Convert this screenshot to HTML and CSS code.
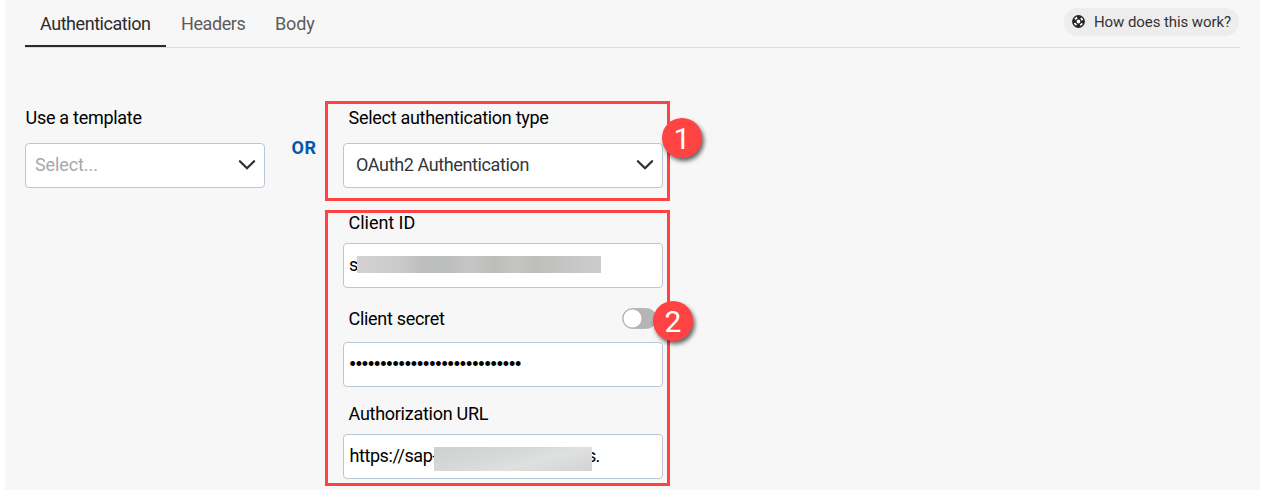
FILE: index.html
```html
<!DOCTYPE html>
<html lang="en">
<head>
<meta charset="utf-8">
<title>Authentication</title>
<link rel="stylesheet" href="styles.css">
</head>
<body>
<main class="panel">
  <header class="topbar">
    <nav class="tabs">
      <a class="tab tab-active"><span>Authentication</span></a>
      <a class="tab tab-headers"><span>Headers</span></a>
      <a class="tab tab-body"><span>Body</span></a>
    </nav>
    <a class="help">
      <svg class="help-icon" width="13" height="13" viewBox="0 0 13 13">
        <circle cx="6.5" cy="6.5" r="4.1" fill="none" stroke="#fff" stroke-width="3"/>
        <circle cx="6.5" cy="6.5" r="5.7" fill="none" stroke="#222" stroke-width="1.4"/>
        <circle cx="6.5" cy="6.5" r="4.1" fill="none" stroke="#222" stroke-width="3" stroke-dasharray="3.8 2.64" stroke-dashoffset="1.9"/>
        <circle cx="6.5" cy="6.5" r="2.5" fill="#fff" stroke="#222" stroke-width="1.2"/>
      </svg>
      <span>How does this work?</span>
    </a>
  </header>
  <div class="content">
    <section class="template">
      <label class="label label-template"><span>Use a template</span></label>
      <div class="field select"><span class="placeholder">Select...</span>
        <svg class="chevron" width="18" height="12" viewBox="0 0 18 12"><path d="M1.9 2.2 9 9.2l7.1-7" fill="none" stroke="#2c3136" stroke-width="2.3" stroke-linecap="round"/></svg>
      </div>
    </section>
    <div class="or"><span>OR</span></div>
    <div class="forms">
      <section class="group group-type">
        <label class="label label-type"><span>Select authentication type</span></label>
        <div class="field select"><span class="value">OAuth2 Authentication</span>
          <svg class="chevron" width="18" height="12" viewBox="0 0 18 12"><path d="M1.9 2.2 9 9.2l7.1-7" fill="none" stroke="#2c3136" stroke-width="2.3" stroke-linecap="round"/></svg>
        </div>
        <div class="badge badge-one">1</div>
      </section>
      <section class="group group-credentials">
        <label class="label label-id"><span>Client ID</span></label>
        <div class="field id-field"><span class="id-start">s</span><i class="mask mask-id"></i></div>
        <div class="secret-row"><label class="label label-secret"><span>Client secret</span></label><i class="toggle"></i></div>
        <div class="field secret-field"><span class="dots">••••••••••••••••••••••••••••</span></div>
        <label class="label label-url"><span>Authorization URL</span></label>
        <div class="field url-field"><span class="url">https://sap-</span><i class="mask mask-url"></i><span class="url-end">s.</span></div>
        <div class="badge badge-two">2</div>
      </section>
    </div>
  </div>
</main>
</body>
</html>
```
FILE: styles.css
```css
* { box-sizing: border-box; }
body { margin: 0; background: #fff; font-family: Roboto, "Liberation Sans", sans-serif; font-size: 18px; color: #000; }
.panel { width: 1255px; height: 490px; margin: 0 5px; padding: 0 20px; background: #f7f7f7; overflow: hidden; }
.topbar { display: flex; justify-content: space-between; width: 1215px; height: 48px; border-bottom: 1px solid #dcdcdc; }
.tabs { display: flex; }
.tab { height: 47px; line-height: 48px; padding: 0 15px; color: #5c5c5c; white-space: nowrap; }
.tab-active { width: 141px; height: 47px; color: #2b2b2b; border-bottom: 2px solid #2b2b2b; letter-spacing: -0.45px; }
.tab-headers { width: 94px; letter-spacing: -0.42px; }
.tab-body { letter-spacing: -0.1px; }
.help { display: flex; align-items: center; width: 175px; height: 28px; margin: 8px 1px 0 0; padding-left: 8px; gap: 9px; border-radius: 14px; background: #ededed; color: #333; font-size: 15px; letter-spacing: -0.08px; white-space: nowrap; }
.help-icon { flex: none; margin-top: -2px; }
.content { display: flex; padding-top: 53px; }
.template { width: 240px; padding-top: 3px; }
.label { display: block; height: 26px; line-height: 26px; white-space: nowrap; }
.label-template { padding-left: 0.5px; line-height: 28px; letter-spacing: -0.28px; }
.field { display: flex; align-items: center; height: 45px; border: 1px solid #b9c7d6; border-radius: 4px; background: #fff; white-space: nowrap; }
.select { justify-content: space-between; padding: 0 8.5px 2px 9px; margin-top: 13px; }
.placeholder { color: #a8a8a8; letter-spacing: -0.1px; }
.value { color: #32363a; letter-spacing: -0.38px; }
.or { width: 60px; padding: 34px 0 0 26.5px; line-height: 26px; font-weight: 700; letter-spacing: 0.6px; color: #0057b0; }
.forms { display: flex; flex-direction: column; gap: 9px; width: 345px; }
.group { position: relative; border: 3px solid #ff4343; padding: 0 4px 0 15px; }
.group .label { padding-left: 5.5px; }
.group-type { height: 100px; }
.group-type .select { padding: 0 8px 2px 12px; }
.label-type { line-height: 28px; letter-spacing: -0.28px; }
.group-credentials { height: 276px; }
.label-id { height: 20px; line-height: 20px; letter-spacing: -0.03px; }
.label-secret { letter-spacing: -0.3px; }
.id-field { margin-top: 10px; padding-left: 5px; }
.id-start { width: 8px; padding-bottom: 2px; }
.mask { flex: none; }
.mask-id { width: 244px; height: 17px; margin-top: -2px; background: linear-gradient(90deg, #d3d2d1, #cbcaca 18%, #bcbdbd 27%, #bdbebe 38%, #c6c6c6 46%, #bdbdbc 56%, #c4c4c3 65%, #bebebd 73%, #c5c5c4 86%, #cbcdcd); }
.secret-row { display: flex; justify-content: space-between; margin-top: 18px; height: 26px; }
.toggle { width: 35px; height: 21px; margin: 2px 6px 0 0; border: 1px solid #b8b8b8; border-radius: 11px; background: radial-gradient(circle at 9.5px 9.5px, #fff 8.5px, #b5b5b5 9.3px); }
.secret-field { margin-top: 10px; padding-left: 5.5px; }
.dots { font-family: "Liberation Sans", Arial, sans-serif; letter-spacing: -0.17px; }
.label-url { margin-top: 14px; letter-spacing: -0.27px; }
.url-field { margin-top: 7px; padding-left: 5px; }
.url { width: 85px; padding-bottom: 2px; padding-left: 0.5px; letter-spacing: -0.42px; }
.mask-url { position: relative; width: 158px; height: 24px; margin-top: 5px; background: linear-gradient(165deg, #cfd0d0, #d8dad9 45%, #dfe1df 62%, #d2d3d2); }
.url-end { margin-left: -5px; padding-bottom: 2px; letter-spacing: -0.8px; }
.badge { position: absolute; display: flex; align-items: center; justify-content: center; width: 40px; height: 40px; border-radius: 50%; background: #ff4343; color: #fff; font-size: 30px; box-shadow: 2px 3px 4px rgba(0,0,0,.6); }
.badge-one { left: 334px; top: 14px; }
.badge-two { left: 325px; top: 88px; }
```
